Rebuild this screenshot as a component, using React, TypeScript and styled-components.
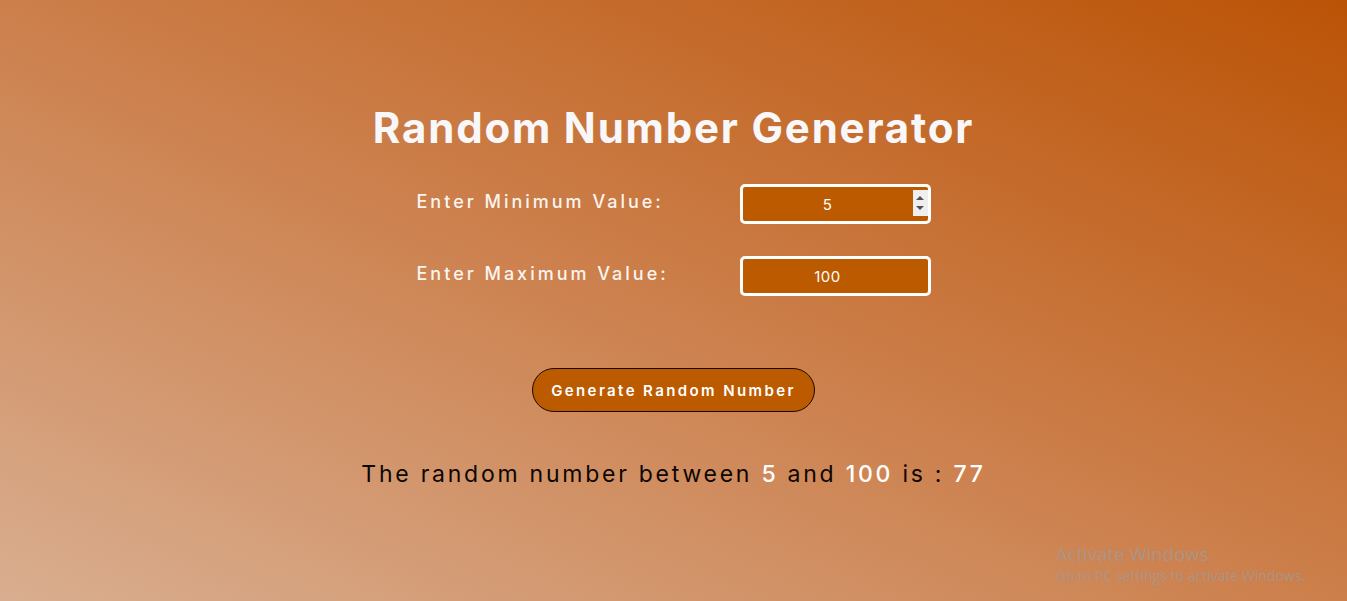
import React from "react";
import styled, { createGlobalStyle } from "styled-components";

const GlobalStyle = createGlobalStyle`
  html, body { margin: 0; padding: 0; }
  body { font-family: Inter, "Open Sans", sans-serif; }
  * { box-sizing: border-box; }
`;

const Page = styled.div`
  position: relative;
  width: 100%;
  height: 601px;
  overflow: hidden;
  background: linear-gradient(to top right, #d9ae90 0%, #cc7f4b 50%, #bb5306 100%);
  display: flex;
  flex-direction: column;
  align-items: center;
  padding-top: 100px;
`;

const Title = styled.h1`
  margin: 0;
  font-family: Inter, sans-serif;
  font-size: 42px;
  line-height: 56px;
  font-weight: 700;
  color: #f8f8fb;
  letter-spacing: 1.8px;
`;

const Form = styled.div`
  margin-top: 28px;
  width: 514px;
  display: flex;
  flex-direction: column;
  gap: 32px;
`;

const Row = styled.div`
  display: flex;
  align-items: center;
  justify-content: space-between;
  height: 40px;
`;

const Label = styled.label`
  font-family: Inter, sans-serif;
  font-size: 18px;
  font-weight: 500;
  letter-spacing: 3px;
  color: #fbf4ee;
  margin-top: -6px;
`;

const InputWrap = styled.div`
  position: relative;
  width: 191px;
  height: 40px;
`;

const NumberInput = styled.input`
  width: 100%;
  height: 100%;
  border: 3px solid #ffffff;
  border-radius: 5px;
  background: #bc5a00;
  color: #ffffff;
  text-align: center;
  font-family: Inter, sans-serif;
  font-size: 15px;
  letter-spacing: 0.5px;
  padding: 1px 17px 0 2px;
  outline: none;
  -moz-appearance: textfield;
  &::-webkit-inner-spin-button,
  &::-webkit-outer-spin-button {
    -webkit-appearance: none;
    margin: 0;
  }
`;

const Spinner = styled.div`
  position: absolute;
  top: 6px;
  right: 3px;
  width: 15px;
  height: 26px;
  background: #efefef;
  display: flex;
  flex-direction: column;
  align-items: center;
  justify-content: space-around;
  padding: 3px 0;
`;

const Arrow = styled.span<{ $down?: boolean }>`
  width: 0;
  height: 0;
  border-left: 4px solid transparent;
  border-right: 4px solid transparent;
  ${(p) => (p.$down ? "border-top: 4px solid #505050;" : "border-bottom: 4px solid #505050;")}
`;

const Button = styled.button`
  margin-top: 72px;
  width: 283px;
  height: 44px;
  border-radius: 22px;
  border: 1px solid #1a0a00;
  background: #bc5a00;
  color: #ffffff;
  font-family: Inter, sans-serif;
  font-size: 15px;
  font-weight: 600;
  letter-spacing: 2.4px;
  cursor: pointer;
`;

const Result = styled.p`
  margin: 46px 0 0;
  font-family: Inter, sans-serif;
  font-size: 23px;
  line-height: 32px;
  letter-spacing: 2.75px;
  color: #0d0602;
`;

const Num = styled.span`
  color: #ffffff;
  font-weight: 500;
`;

const Watermark = styled.div`
  position: absolute;
  left: 1056px;
  top: 543px;
  color: rgba(168, 150, 140, 0.9);
  font-family: "Open Sans", "Noto Sans", sans-serif;
`;

const WmTitle = styled.div`
  font-size: 18.6px;
  line-height: 22px;
`;

const WmSub = styled.div`
  font-size: 14px;
  line-height: 18px;
  margin-top: 2px;
`;

export default function App() {
  return (
    <>
      <GlobalStyle />
      <Page>
        <Title>Random Number Generator</Title>
        <Form>
          <Row>
            <Label>Enter Minimum Value:</Label>
            <InputWrap>
              <NumberInput type="number" defaultValue={5} />
              <Spinner>
                <Arrow />
                <Arrow $down />
              </Spinner>
            </InputWrap>
          </Row>
          <Row>
            <Label>Enter Maximum Value:</Label>
            <InputWrap>
              <NumberInput type="number" defaultValue={100} />
            </InputWrap>
          </Row>
        </Form>
        <Button>Generate Random Number</Button>
        <Result>
          The random number between <Num>5</Num> and <Num>100</Num> is : <Num>77</Num>
        </Result>
        <Watermark>
          <WmTitle>Activate Windows</WmTitle>
          <WmSub>Go to PC settings to activate Windows.</WmSub>
        </Watermark>
      </Page>
    </>
  );
}
